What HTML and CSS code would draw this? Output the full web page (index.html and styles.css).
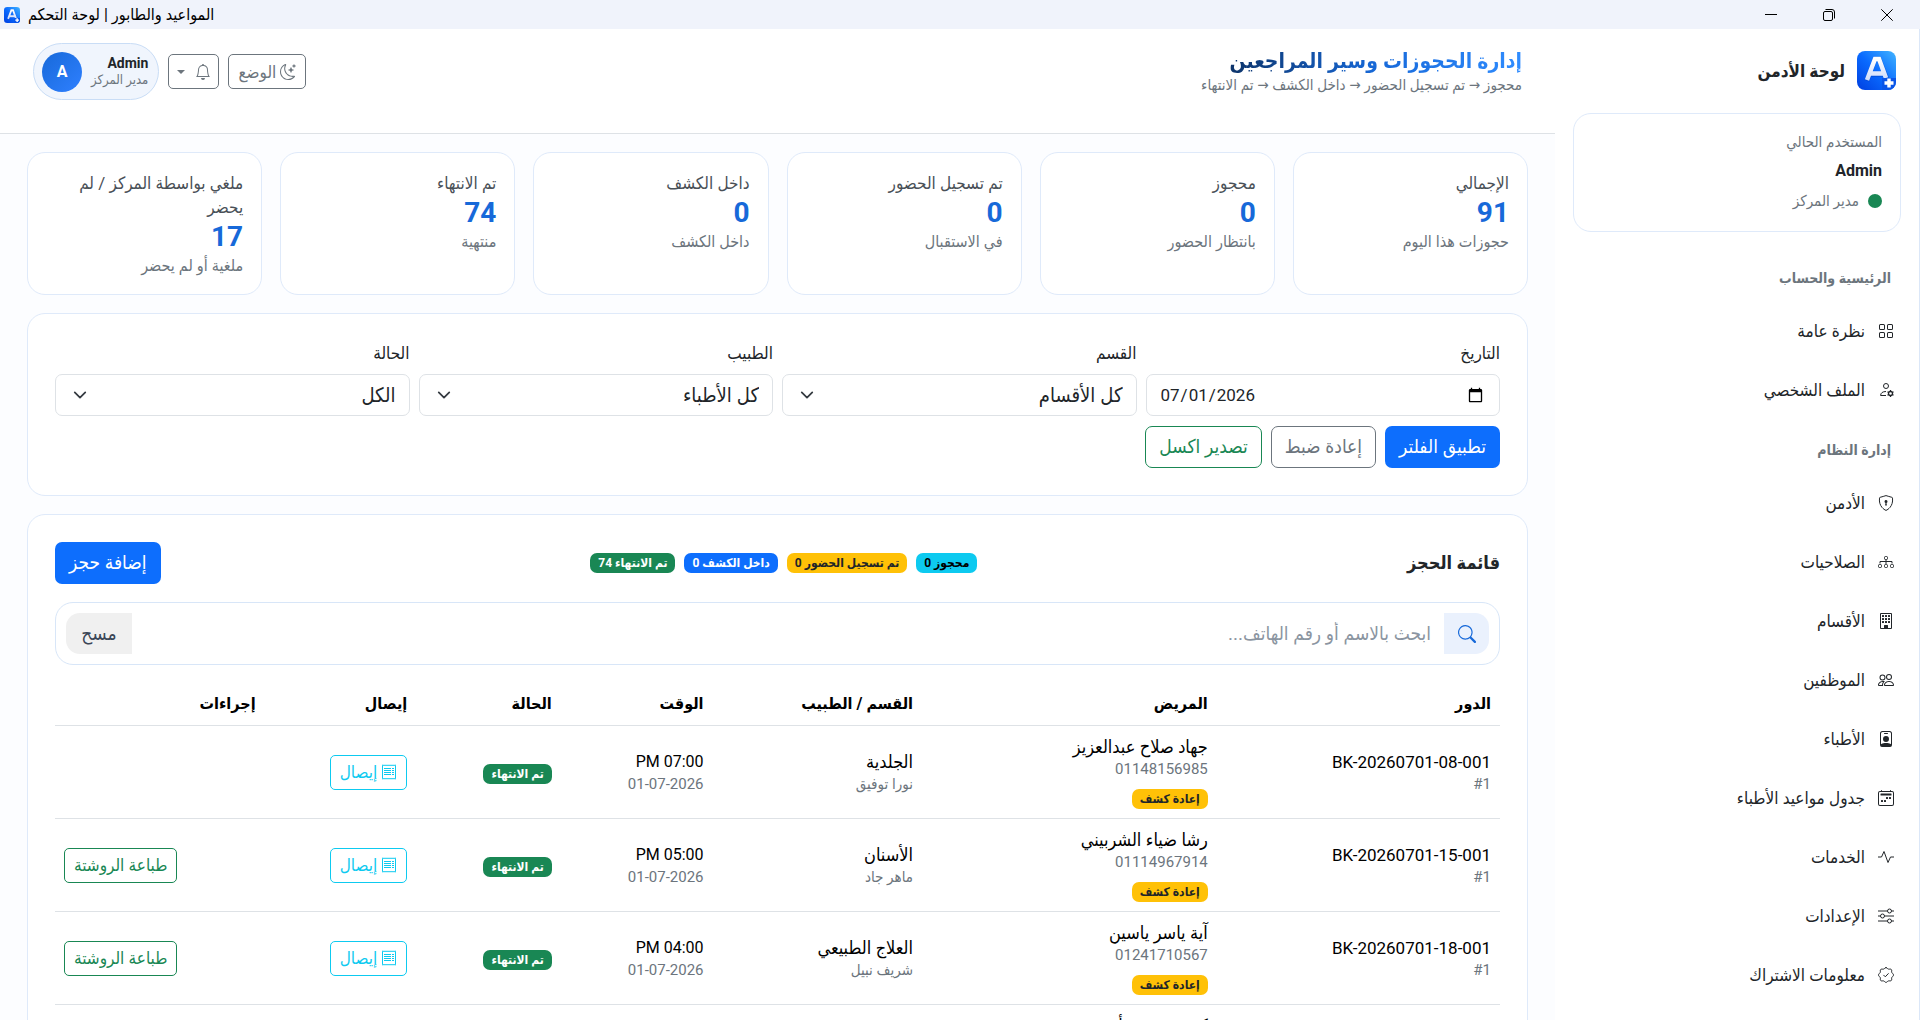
FILE: index.html
```
<!DOCTYPE html>
<html lang="ar" dir="rtl">
<head>
    <meta charset="UTF-8">
    <meta name="viewport" content="width=device-width, initial-scale=1.0">
    <title>المواعيد والطابور | لوحة التحكم</title>
    <link rel="stylesheet" href="styles.css">
</head>
<body>
    <!-- Icon set -->
    <svg class="sprite" aria-hidden="true">
        <defs>
            <linearGradient id="logo-bg" x1="0" y1="1" x2="1" y2="0">
                <stop offset="0" stop-color="#003fe0"/>
                <stop offset=".5" stop-color="#0a6bff"/>
                <stop offset="1" stop-color="#42b4ff"/>
            </linearGradient>
            <linearGradient id="logo-mark" x1="0" y1="0" x2="0" y2="1">
                <stop offset="0" stop-color="#fff"/>
                <stop offset="1" stop-color="#cfdcfa"/>
            </linearGradient>
        </defs>
        <symbol id="i-logo" viewBox="0 0 39 39">
            <rect width="39" height="39" rx="8" fill="url(#logo-bg)"/>
            <path d="M10 30 18 8h4l8 20M14 23.500h12" fill="none" stroke="#0038b8" stroke-opacity=".35" stroke-width="5"/>
            <path d="M10 29 18 8h4l7 19M14 22.500h12" fill="none" stroke="url(#logo-mark)" stroke-width="4.500"/>
            <path d="M25 27h14v4a8 8 0 0 1-8 8h-6z" fill="#0a55e8"/>
            <path d="M32 27.500v9M27.500 32h9" stroke="#fff" stroke-width="3.400"/>
        </symbol>
        <symbol id="i-grid" viewBox="0 0 16 16">
            <path d="M1 2.500A1.500 1.500 0 0 1 2.500 1h3A1.500 1.500 0 0 1 7 2.500v3A1.500 1.500 0 0 1 5.500 7h-3A1.500 1.500 0 0 1 1 5.500zM2.500 2a.5.5 0 0 0-.5.5v3a.5.5 0 0 0 .5.5h3a.5.5 0 0 0 .5-.5v-3a.5.5 0 0 0-.5-.5zm6.500.5A1.500 1.500 0 0 1 10.500 1h3A1.500 1.500 0 0 1 15 2.500v3A1.500 1.500 0 0 1 13.500 7h-3A1.500 1.500 0 0 1 9 5.500zm1.500-.5a.5.5 0 0 0-.5.5v3a.5.5 0 0 0 .5.5h3a.5.5 0 0 0 .5-.5v-3a.5.5 0 0 0-.5-.5zM1 10.500A1.500 1.500 0 0 1 2.500 9h3A1.500 1.500 0 0 1 7 10.500v3A1.500 1.500 0 0 1 5.500 15h-3A1.500 1.500 0 0 1 1 13.500zm1.500-.5a.5.5 0 0 0-.5.5v3a.5.5 0 0 0 .5.5h3a.5.5 0 0 0 .5-.5v-3a.5.5 0 0 0-.5-.5zm6.500.5A1.500 1.500 0 0 1 10.500 9h3a1.500 1.500 0 0 1 1.500 1.500v3a1.500 1.500 0 0 1-1.500 1.500h-3A1.500 1.500 0 0 1 9 13.500zm1.500-.5a.5.5 0 0 0-.5.5v3a.5.5 0 0 0 .5.5h3a.5.5 0 0 0 .5-.5v-3a.5.5 0 0 0-.5-.5z"/>
        </symbol>
        <symbol id="i-person-gear" viewBox="0 0 16 16">
            <g fill="none" stroke="currentColor">
                <circle cx="8" cy="4" r="2.500"/>
                <path d="M8 13.500H2.600c0-2.500 2-4 5.400-4"/>
                <circle cx="12.500" cy="11.500" r="2" stroke-width="1.300"/>
                <path d="M12.500 8v1.500m0 4V15M9.500 9.800l1.200.7m3.600 2 1.200.7m0-3.400-1.200.7m-3.600 2-1.200.7" stroke-width="1.300"/>
            </g>
        </symbol>
        <symbol id="i-shield" viewBox="0 0 16 16">
            <path d="M8 .6C6.400 1.100 4 1.800 2.200 2.300a.9.9 0 0 0-.7.800C1 7.200 2.200 10.200 4 12.400c1.200 1.400 2.700 2.500 4 3 1.300-.5 2.800-1.600 4-3 1.800-2.200 3-5.200 2.500-9.300a.9.9 0 0 0-.7-.8C12 1.800 9.600 1.100 8 .6z" fill="none" stroke="currentColor"/>
            <path d="M9.500 6.500a1.500 1.500 0 0 1-1 1.415l.385 1.990a.5.5 0 0 1-.491.595h-.788a.5.5 0 0 1-.490-.595l.384-1.990a1.500 1.500 0 1 1 2-1.415"/>
        </symbol>
        <symbol id="i-diagram" viewBox="0 0 16 16">
            <g fill="none" stroke="currentColor">
                <rect x="6.500" y="2.500" width="3" height="3" rx="1"/>
                <rect x=".5" y="10.500" width="3" height="3" rx="1"/>
                <rect x="6.500" y="10.500" width="3" height="3" rx="1"/>
                <rect x="12.500" y="10.500" width="3" height="3" rx="1"/>
                <path d="M8 5.500V10M2 9.500v-2h12v2"/>
            </g>
        </symbol>
        <symbol id="i-building" viewBox="0 0 16 16">
            <path d="M4 2.500a.5.5 0 0 1 .5-.5h1a.5.5 0 0 1 .5.5v1a.5.5 0 0 1-.5.5h-1a.5.5 0 0 1-.5-.5zm3 0a.5.5 0 0 1 .5-.5h1a.5.5 0 0 1 .5.5v1a.5.5 0 0 1-.5.5h-1a.5.5 0 0 1-.5-.5zm3.500-.5a.5.5 0 0 0-.5.5v1a.5.5 0 0 0 .5.5h1a.5.5 0 0 0 .5-.5v-1a.5.5 0 0 0-.5-.5zM4 5.500a.5.5 0 0 1 .5-.5h1a.5.5 0 0 1 .5.5v1a.5.5 0 0 1-.5.5h-1a.5.5 0 0 1-.5-.5zM7.500 5a.5.5 0 0 0-.5.5v1a.5.5 0 0 0 .5.5h1a.5.5 0 0 0 .5-.5v-1a.5.5 0 0 0-.5-.5zm2.500.5a.5.5 0 0 1 .5-.5h1a.5.5 0 0 1 .5.5v1a.5.5 0 0 1-.5.5h-1a.5.5 0 0 1-.5-.5zM4.500 8a.5.5 0 0 0-.5.5v1a.5.5 0 0 0 .5.5h1a.5.5 0 0 0 .5-.5v-1a.5.5 0 0 0-.5-.5zm2.500.5a.5.5 0 0 1 .5-.5h1a.5.5 0 0 1 .5.5v1a.5.5 0 0 1-.5.5h-1a.5.5 0 0 1-.5-.5zm3.500-.5a.5.5 0 0 0-.5.5v1a.5.5 0 0 0 .5.5h1a.5.5 0 0 0 .5-.5v-1a.5.5 0 0 0-.5-.5z"/>
            <path d="M2 1a1 1 0 0 1 1-1h10a1 1 0 0 1 1 1v14a1 1 0 0 1-1 1H3a1 1 0 0 1-1-1zm11 0H3v14h3v-2.500a.5.5 0 0 1 .5-.5h3a.5.5 0 0 1 .5.5V15h3z"/>
        </symbol>
        <symbol id="i-people" viewBox="0 0 16 16">
            <path d="M15 14s1 0 1-1-1-4-5-4-5 3-5 4 1 1 1 1zm-7.978-1L7 12.996c.001-.264.167-1.030.760-1.720C8.312 10.629 9.282 10 11 10c1.717 0 2.687.63 3.240 1.276.593.690.758 1.457.760 1.720l-.008.002-.014.002zM11 7a2 2 0 1 0 0-4 2 2 0 0 0 0 4m3-2a3 3 0 1 1-6 0 3 3 0 0 1 6 0M6.936 9.280a6 6 0 0 0-1.230-.247A7 7 0 0 0 5 9c-4 0-5 3-5 4q0 1 1 1h4.216A2.240 2.240 0 0 1 5 13c0-1.010.377-2.042 1.090-2.904.243-.294.526-.569.846-.816M4.920 10A5.500 5.500 0 0 0 4 13H1c0-.26.164-1.030.760-1.724.545-.636 1.492-1.256 3.160-1.275ZM1.500 5.500a3 3 0 1 1 6 0 3 3 0 0 1-6 0m3-2a2 2 0 1 0 0 4 2 2 0 0 0 0-4"/>
        </symbol>
        <symbol id="i-badge" viewBox="0 0 16 16">
            <path d="M6.500 2a.5.5 0 0 0 0 1h3a.5.5 0 0 0 0-1zM11 8a3 3 0 1 1-6 0 3 3 0 0 1 6 0"/>
            <path d="M4.500 0A2.500 2.500 0 0 0 2 2.500V14a2 2 0 0 0 2 2h8a2 2 0 0 0 2-2V2.500A2.500 2.500 0 0 0 11.500 0zM3 2.500A1.500 1.500 0 0 1 4.500 1h7A1.500 1.500 0 0 1 13 2.500v10.795a4.200 4.200 0 0 0-.776-.492C11.392 12.387 10.063 12 8 12s-3.392.387-4.224.803a4.200 4.200 0 0 0-.776.492z"/>
        </symbol>
        <symbol id="i-calendar" viewBox="0 0 16 16">
            <path d="M3.500 0a.5.5 0 0 1 .5.5V1h8V.5a.5.5 0 0 1 1 0V1h1a2 2 0 0 1 2 2v11a2 2 0 0 1-2 2H2a2 2 0 0 1-2-2V3a2 2 0 0 1 2-2h1V.5a.5.5 0 0 1 .5-.5M2 2a1 1 0 0 0-1 1v11a1 1 0 0 0 1 1h12a1 1 0 0 0 1-1V3a1 1 0 0 0-1-1z"/>
            <path d="M2.500 4a.5.5 0 0 1 .5-.5h10a.5.5 0 0 1 .5.5v1a.5.5 0 0 1-.5.5H3a.5.5 0 0 1-.5-.5zM11 7.500a.5.5 0 0 1 .5-.5h1a.5.5 0 0 1 .5.5v1a.5.5 0 0 1-.5.5h-1a.5.5 0 0 1-.5-.5zm-3 0a.5.5 0 0 1 .5-.5h1a.5.5 0 0 1 .5.5v1a.5.5 0 0 1-.5.5h-1a.5.5 0 0 1-.5-.5zm-5 3a.5.5 0 0 1 .5-.5h1a.5.5 0 0 1 .5.5v1a.5.5 0 0 1-.5.5h-1a.5.5 0 0 1-.5-.5zm3 0a.5.5 0 0 1 .5-.5h1a.5.5 0 0 1 .5.5v1a.5.5 0 0 1-.5.5h-1a.5.5 0 0 1-.5-.5z"/>
        </symbol>
        <symbol id="i-activity" viewBox="0 0 16 16">
            <path d="M0 8h3.500L6 2.500l4 11L12.500 8H16" fill="none" stroke="currentColor" stroke-linejoin="round"/>
        </symbol>
        <symbol id="i-sliders" viewBox="0 0 16 16">
            <g fill="none" stroke="currentColor">
                <circle cx="11.500" cy="3" r="2"/>
                <circle cx="4.500" cy="8" r="2"/>
                <circle cx="11.500" cy="13" r="2"/>
                <path d="M0 3h9.500m4 0H16M0 8h2.500m4 0H16M0 13h9.500m4 0H16"/>
            </g>
        </symbol>
        <symbol id="i-patch" viewBox="0 0 16 16">
            <g fill="none" stroke="currentColor" stroke-linejoin="round" stroke-linecap="round">
                <path d="M8 .6c1 0 1.500 1.300 2.500 1.500s2.200-.4 2.900.5c.7.800-.1 2 .4 2.900s1.700 1.400 1.700 2.500-1.200 1.600-1.700 2.500.3 2.100-.4 2.900-1.900.3-2.900.5S9 15.400 8 15.400s-1.500-1.300-2.500-1.500-2.200.4-2.900-.5.100-2-.4-2.900S.5 9.100.5 8s1.200-1.600 1.700-2.500-.3-2.100.4-2.900 1.900-.3 2.900-.5S7 .6 8 .6z"/>
                <path d="m5.700 8.200 1.600 1.600 3-3.200"/>
            </g>
        </symbol>
        <symbol id="i-moon" viewBox="0 0 16 16">
            <path d="M6 .278a.77.77 0 0 1 .080.858 7.200 7.200 0 0 0-.878 3.460c0 4.021 3.278 7.277 7.318 7.277q.792-.001 1.533-.160a.79.79 0 0 1 .810.316.73.73 0 0 1-.031.893A8.350 8.350 0 0 1 8.344 16C3.734 16 0 12.286 0 7.710 0 4.266 2.114 1.312 5.124.060A.75.75 0 0 1 6 .278M4.858 1.311A7.270 7.270 0 0 0 1.025 7.710c0 4.020 3.279 7.276 7.319 7.276a7.320 7.320 0 0 0 5.205-2.162q-.506.063-1.029.063c-4.610 0-8.343-3.714-8.343-8.290 0-1.167.242-2.278.681-3.286"/>
            <path d="M10.794 3.148a.217.217 0 0 1 .412 0l.387 1.162c.173.518.579.924 1.097 1.097l1.162.387a.217.217 0 0 1 0 .412l-1.162.387a1.730 1.730 0 0 0-1.097 1.097l-.387 1.162a.217.217 0 0 1-.412 0l-.387-1.162A1.730 1.730 0 0 0 9.310 6.593l-1.162-.387a.217.217 0 0 1 0-.412l1.162-.387a1.730 1.730 0 0 0 1.097-1.097zM13.863.099a.145.145 0 0 1 .274 0l.258.774c.115.346.386.617.732.732l.774.258a.145.145 0 0 1 0 .274l-.774.258a1.160 1.160 0 0 0-.732.732l-.258.774a.145.145 0 0 1-.274 0l-.258-.774a1.160 1.160 0 0 0-.732-.732l-.774-.258a.145.145 0 0 1 0-.274l.774-.258c.346-.115.617-.386.732-.732z"/>
        </symbol>
        <symbol id="i-bell" viewBox="0 0 16 16">
            <path d="M8 16a2 2 0 0 0 2-2H6a2 2 0 0 0 2 2M8 1.918l-.797.161A4 4 0 0 0 4 6c0 .628-.134 2.197-.459 3.742-.160.767-.376 1.566-.663 2.258h10.244c-.287-.692-.502-1.490-.663-2.258C12.134 8.197 12 6.628 12 6a4 4 0 0 0-3.203-3.920zM14.220 12c.223.447.481.801.780 1H1c.299-.199.557-.553.780-1C2.680 10.200 3 6.880 3 6c0-2.420 1.720-4.440 4.005-4.901a1 1 0 1 1 1.990 0A5 5 0 0 1 13 6c0 .880.320 4.200 1.220 6"/>
        </symbol>
        <symbol id="i-search" viewBox="0 0 16 16">
            <path d="M11.742 10.344a6.500 6.500 0 1 0-1.397 1.398h-.001q.044.060.098.115l3.850 3.850a1 1 0 0 0 1.415-1.414l-3.850-3.850a1 1 0 0 0-.115-.1zM12 6.500a5.500 5.500 0 1 1-11 0 5.500 5.500 0 0 1 11 0"/>
        </symbol>
        <symbol id="i-receipt" viewBox="0 0 16 16">
            <g fill="none" stroke="currentColor">
                <path d="M1.500 1.500v13M14.500 1.500v13"/>
                <path d="m1 1.500 1-.6 1 .8 1-.8 1 .8 1-.8 1 .8 1-.8 1 .8 1-.8 1 .8 1-.8 1 .8 1-.8 1 .6M1 14.500l1 .6 1-.8 1 .8 1-.8 1 .8 1-.8 1 .8 1-.8 1 .8 1-.8 1 .8 1-.8 1 .8 1-.6"/>
                <path d="M3 4.500h7m1 0h2M3 6.500h7m1 0h2M3 8.500h7m1 0h2M3 10.500h7m1 0h2"/>
            </g>
        </symbol>
    </svg>

    <!-- Window title bar -->
    <header class="titlebar" dir="ltr">
        <svg class="titlebar-logo"><use href="#i-logo"/></svg>
        <span class="titlebar-text" dir="rtl">المواعيد والطابور | لوحة التحكم</span>
        <div class="window-controls">
            <button type="button" aria-label="تصغير"><svg viewBox="0 0 12 12"><path d="M0 5.500h12"/></svg></button>
            <button type="button" aria-label="استعادة"><svg viewBox="0 0 12 12"><rect x=".5" y="2.500" width="9" height="9" rx="1.500"/><path d="M2.500.5h6.500a2.500 2.500 0 0 1 2.500 2.500v6.500"/></svg></button>
            <button type="button" aria-label="إغلاق"><svg viewBox="0 0 12 12"><path d="m.3.3 11.400 11.400M11.700.3.3 11.700"/></svg></button>
        </div>
    </header>

    <div class="layout">
        <aside class="sidebar">
            <div class="brand">
                <svg class="brand-logo"><use href="#i-logo"/></svg>
                <span>لوحة الأدمن</span>
            </div>

            <div class="current-user">
                <div class="muted">المستخدم الحالي</div>
                <div class="current-name">Admin</div>
                <div class="current-role"><span class="dot"></span><span class="muted">مدير المركز</span></div>
            </div>

            <nav class="nav">
                <div class="nav-title">الرئيسية والحساب</div>
                <a class="nav-link" href="#"><svg class="icon"><use href="#i-grid"/></svg>نظرة عامة</a>
                <a class="nav-link" href="#"><svg class="icon"><use href="#i-person-gear"/></svg>الملف الشخصي</a>
                <div class="nav-title">إدارة النظام</div>
                <a class="nav-link" href="#"><svg class="icon"><use href="#i-shield"/></svg>الأدمن</a>
                <a class="nav-link" href="#"><svg class="icon"><use href="#i-diagram"/></svg>الصلاحيات</a>
                <a class="nav-link" href="#"><svg class="icon"><use href="#i-building"/></svg>الأقسام</a>
                <a class="nav-link" href="#"><svg class="icon"><use href="#i-people"/></svg>الموظفين</a>
                <a class="nav-link" href="#"><svg class="icon"><use href="#i-badge"/></svg>الأطباء</a>
                <a class="nav-link" href="#"><svg class="icon"><use href="#i-calendar"/></svg>جدول مواعيد الأطباء</a>
                <a class="nav-link" href="#"><svg class="icon"><use href="#i-activity"/></svg>الخدمات</a>
                <a class="nav-link" href="#"><svg class="icon"><use href="#i-sliders"/></svg>الإعدادات</a>
                <a class="nav-link" href="#"><svg class="icon"><use href="#i-patch"/></svg>معلومات الاشتراك</a>
            </nav>
        </aside>

        <main class="main">
            <div class="topbar">
                <div>
                    <h1 class="page-title">إدارة الحجوزات وسير المراجعين</h1>
                    <div class="page-subtitle">محجوز → تم تسجيل الحضور → داخل الكشف → تم الانتهاء</div>
                </div>
                <div class="topbar-actions">
                    <button type="button" class="btn btn-sm btn-outline-secondary"><svg class="icon"><use href="#i-moon"/></svg>الوضع</button>
                    <button type="button" class="btn btn-sm btn-outline-secondary btn-bell" aria-label="الإشعارات"><svg class="icon"><use href="#i-bell"/></svg><span class="caret"></span></button>
                    <div class="user-pill">
                        <div>
                            <div class="pill-name">Admin</div>
                            <div class="pill-role">مدير المركز</div>
                        </div>
                        <div class="avatar">A</div>
                    </div>
                </div>
            </div>

            <div class="content">
                <section class="stats">
                    <div class="card stat">
                        <div class="stat-label">الإجمالي</div>
                        <div class="stat-value">91</div>
                        <div class="stat-note">حجوزات هذا اليوم</div>
                    </div>
                    <div class="card stat">
                        <div class="stat-label">محجوز</div>
                        <div class="stat-value">0</div>
                        <div class="stat-note">بانتظار الحضور</div>
                    </div>
                    <div class="card stat">
                        <div class="stat-label">تم تسجيل الحضور</div>
                        <div class="stat-value">0</div>
                        <div class="stat-note">في الاستقبال</div>
                    </div>
                    <div class="card stat">
                        <div class="stat-label">داخل الكشف</div>
                        <div class="stat-value">0</div>
                        <div class="stat-note">داخل الكشف</div>
                    </div>
                    <div class="card stat">
                        <div class="stat-label">تم الانتهاء</div>
                        <div class="stat-value">74</div>
                        <div class="stat-note">منتهية</div>
                    </div>
                    <div class="card stat">
                        <div class="stat-label">ملغي بواسطة المركز / لم يحضر</div>
                        <div class="stat-value">17</div>
                        <div class="stat-note">ملغية أو لم يحضر</div>
                    </div>
                </section>

                <form class="card filters">
                    <div class="filter-grid">
                        <div>
                            <label class="form-label" for="date">التاريخ</label>
                            <input class="form-control" type="date" id="date" value="2026-07-01" dir="ltr">
                        </div>
                        <div>
                            <label class="form-label" for="department">القسم</label>
                            <select class="form-control form-select" id="department"><option>كل الأقسام</option></select>
                        </div>
                        <div>
                            <label class="form-label" for="doctor">الطبيب</label>
                            <select class="form-control form-select" id="doctor"><option>كل الأطباء</option></select>
                        </div>
                        <div>
                            <label class="form-label" for="status">الحالة</label>
                            <select class="form-control form-select" id="status"><option>الكل</option></select>
                        </div>
                    </div>
                    <div class="filter-actions">
                        <button type="button" class="btn btn-primary">تطبيق الفلتر</button>
                        <button type="button" class="btn btn-outline-secondary">إعادة ضبط</button>
                        <button type="button" class="btn btn-outline-success">تصدير اكسل</button>
                    </div>
                </form>

                <section class="card bookings">
                    <div class="bookings-head">
                        <h2 class="bookings-title">قائمة الحجز</h2>
                        <div class="badges">
                            <span class="badge bg-info">محجوز 0</span>
                            <span class="badge bg-warning">تم تسجيل الحضور 0</span>
                            <span class="badge bg-primary">داخل الكشف 0</span>
                            <span class="badge bg-success">تم الانتهاء 74</span>
                        </div>
                        <button type="button" class="btn btn-primary">إضافة حجز</button>
                    </div>

                    <div class="search">
                        <label class="search-icon" for="search" aria-label="بحث"><svg class="icon"><use href="#i-search"/></svg></label>
                        <input class="search-input" type="text" id="search" placeholder="ابحث بالاسم أو رقم الهاتف...">
                        <button type="button" class="search-clear">مسح</button>
                    </div>

                    <table class="table">
                        <thead>
                            <tr>
                                <th class="col-turn">الدور</th>
                                <th class="col-patient">المريض</th>
                                <th class="col-dept">القسم / الطبيب</th>
                                <th class="col-time">الوقت</th>
                                <th class="col-status">الحالة</th>
                                <th class="col-receipt">إيصال</th>
                                <th class="col-actions">إجراءات</th>
                            </tr>
                        </thead>
                        <tbody>
                            <tr>
                                <td><div class="code">BK-20260701-08-001</div><div class="small" dir="ltr">#1</div></td>
                                <td class="patient"><div>جهاد صلاح عبدالعزيز</div><div class="small">01148156985</div><span class="badge bg-warning">إعادة كشف</span></td>
                                <td><div>الجلدية</div><div class="small">نورا توفيق</div></td>
                                <td><div class="time">07:00 PM</div><div class="small"><bdi>01-07-2026</bdi></div></td>
                                <td><span class="badge bg-success">تم الانتهاء</span></td>
                                <td><button type="button" class="btn btn-sm btn-outline-info"><svg class="icon"><use href="#i-receipt"/></svg>إيصال</button></td>
                                <td class="actions"></td>
                            </tr>
                            <tr>
                                <td><div class="code">BK-20260701-15-001</div><div class="small" dir="ltr">#1</div></td>
                                <td class="patient"><div>رشا ضياء الشربيني</div><div class="small">01114967914</div><span class="badge bg-warning">إعادة كشف</span></td>
                                <td><div>الأسنان</div><div class="small">ماهر جاد</div></td>
                                <td><div class="time">05:00 PM</div><div class="small"><bdi>01-07-2026</bdi></div></td>
                                <td><span class="badge bg-success">تم الانتهاء</span></td>
                                <td><button type="button" class="btn btn-sm btn-outline-info"><svg class="icon"><use href="#i-receipt"/></svg>إيصال</button></td>
                                <td class="actions"><button type="button" class="btn btn-sm btn-outline-success">طباعة الروشتة</button></td>
                            </tr>
                            <tr>
                                <td><div class="code">BK-20260701-18-001</div><div class="small" dir="ltr">#1</div></td>
                                <td class="patient"><div>آية ياسر ياسين</div><div class="small">01241710567</div><span class="badge bg-warning">إعادة كشف</span></td>
                                <td><div>العلاج الطبيعي</div><div class="small">شريف نبيل</div></td>
                                <td><div class="time">04:00 PM</div><div class="small"><bdi>01-07-2026</bdi></div></td>
                                <td><span class="badge bg-success">تم الانتهاء</span></td>
                                <td><button type="button" class="btn btn-sm btn-outline-info"><svg class="icon"><use href="#i-receipt"/></svg>إيصال</button></td>
                                <td class="actions"><button type="button" class="btn btn-sm btn-outline-success">طباعة الروشتة</button></td>
                            </tr>
                            <tr>
                                <td></td>
                                <td class="patient"><div>كريم محمود أنور</div></td>
                                <td></td>
                                <td></td>
                                <td></td>
                                <td></td>
                                <td class="actions"></td>
                            </tr>
                        </tbody>
                    </table>
                </section>
            </div>
        </main>
    </div>
</body>
</html>
```

FILE: styles.css
```
* {
    box-sizing: border-box;
}

body {
    margin: 0;
    height: 100vh;
    display: flex;
    flex-direction: column;
    overflow: hidden;
    font-family: Roboto, "DejaVu Sans Condensed", "DejaVu Sans", sans-serif;
    font-size: 16px;
    line-height: 24px;
    color: #212529;
    background-color: #fcfdff;
}

button,
input,
select {
    font-family: inherit;
}

.sprite {
    position: absolute;
    width: 0;
    height: 0;
}

.icon {
    width: 16px;
    height: 16px;
    fill: currentColor;
    flex-shrink: 0;
}

/* Window title bar */
.titlebar {
    display: flex;
    align-items: center;
    height: 29px;
    flex-shrink: 0;
    padding: 0 4px;
    gap: 8px;
    background-color: #f0f3fb;
    color: #000;
    font-size: 16px;
}

.titlebar-logo {
    width: 16px;
    height: 16px;
}

.window-controls {
    display: flex;
    margin-left: auto;
    height: 100%;
}

.window-controls button {
    width: 58px;
    padding: 0;
    border: none;
    background: none;
    display: flex;
    align-items: center;
    justify-content: center;
}

.window-controls svg {
    width: 12px;
    height: 12px;
    fill: none;
    stroke: #000;
}

.layout {
    display: flex;
    flex: 1;
    min-height: 0;
}

/* Sidebar */
.sidebar {
    width: 365px;
    flex-shrink: 0;
    padding: 22px 18px;
    background-color: #fff;
    border-right: 1px solid #dbe7f8;
    overflow: hidden;
}

.brand {
    display: flex;
    align-items: center;
    gap: 12px;
    padding: 0 5px;
    font-size: 17px;
    font-weight: bold;
}

.brand-logo {
    width: 39px;
    height: 39px;
}

.current-user {
    margin-top: 23px;
    padding: 18px;
    border: 1px solid #dfeafa;
    border-radius: 18px;
    display: flex;
    flex-direction: column;
    gap: 6px;
}

.muted {
    color: #6c757d;
    font-size: 15px;
    line-height: 21px;
}

.current-name {
    font-weight: bold;
}

.current-role {
    display: flex;
    align-items: center;
    gap: 9px;
    min-height: 24px;
}

.dot {
    width: 14px;
    height: 14px;
    border-radius: 50%;
    background-color: #198754;
}

.nav {
    display: flex;
    flex-direction: column;
    padding-top: 34px;
}

.nav-title {
    padding: 0 10px;
    margin-bottom: 11px;
    font-size: 14px;
    font-weight: bold;
    color: #6c757d;
}

.nav-link + .nav-title {
    margin-top: 19px;
}

.nav-link {
    display: flex;
    align-items: center;
    gap: 13px;
    height: 59px;
    padding: 0 7px;
    color: #212529;
    font-size: 17px;
    text-decoration: none;
}

/* Top bar */
.main {
    flex: 1;
    min-width: 0;
}

.topbar {
    display: flex;
    justify-content: space-between;
    align-items: flex-start;
    height: 105px;
    padding: 14px 33px;
    background-color: #fff;
    border-bottom: 1px solid #dee2e6;
}

.page-title {
    margin: 4px 0 0;
    font-size: 21px;
    line-height: 28px;
    font-weight: bold;
    color: transparent;
    background: linear-gradient(to left, #2f8cff, #1769d9 45%, #0b2a55);
    background-clip: text;
    -webkit-background-clip: text;
}

.page-subtitle {
    font-size: 15px;
    line-height: 21px;
    color: #6c757d;
}

.topbar-actions {
    display: flex;
    align-items: center;
    gap: 9px;
}

.user-pill {
    display: flex;
    align-items: center;
    gap: 9px;
    height: 57px;
    padding: 0 10px 0 8px;
    border: 1px solid #c9ddf6;
    border-radius: 29px;
    background-color: #f0f5fd;
}

.pill-name {
    font-size: 14px;
    line-height: 16px;
    font-weight: bold;
}

.pill-role {
    font-size: 13px;
    line-height: 18px;
    color: #6c757d;
}

.avatar {
    width: 40px;
    height: 40px;
    border-radius: 50%;
    background: linear-gradient(135deg, #1769d9, #2f80ff);
    color: #fff;
    font-weight: bold;
    line-height: 40px;
    text-align: center;
}

.btn-bell {
    width: 51px;
}

.caret {
    border: 4px solid transparent;
    border-top-color: currentColor;
    border-bottom: 0;
    margin-right: 6px;
}

/* Buttons */
.btn {
    display: inline-flex;
    align-items: center;
    justify-content: center;
    gap: 4px;
    height: 42px;
    padding: 0 13px;
    border: 1px solid transparent;
    border-radius: 7px;
    background-color: #fff;
    font-size: 19px;
    line-height: 24px;
    white-space: nowrap;
    cursor: pointer;
}

.btn-sm {
    height: 35px;
    padding: 0 9px;
    border-radius: 5px;
    font-size: 17px;
}

.btn-primary {
    background-color: #0d6efd;
    color: #fff;
}

.btn-outline-secondary {
    border-color: #6c757d;
    color: #6c757d;
}

.btn-outline-success {
    border-color: #198754;
    color: #198754;
}

.btn-outline-info {
    border-color: #0dcaf0;
    color: #0dcaf0;
}

/* Cards */
.content {
    display: flex;
    flex-direction: column;
    gap: 18px;
    padding: 18px 27px;
}

.card {
    background-color: #fff;
    border: 1px solid #dfeafa;
    border-radius: 18px;
}

.stats {
    display: grid;
    grid-template-columns: repeat(6, 1fr);
    gap: 18px;
}

.stat {
    padding: 18px;
}

.stat-label {
    font-size: 17px;
    color: #495057;
}

.stat-value {
    font-size: 28px;
    line-height: 36px;
    font-weight: bold;
    color: #1769d9;
}

.stat-note {
    font-size: 16px;
    line-height: 21px;
    color: #6c757d;
}

/* Filters */
.filters {
    padding: 27px;
}

.filter-grid {
    display: grid;
    grid-template-columns: repeat(4, 1fr);
    gap: 9px;
}

.form-label {
    display: block;
    margin-bottom: 9px;
    font-size: 17px;
}

.form-control {
    display: block;
    width: 100%;
    height: 42px;
    padding: 0 13px;
    border: 1px solid #dee2e6;
    border-radius: 7px;
    background-color: #fff;
    color: #212529;
    font-size: 20px;
}

input.form-control {
    font-size: 17px;
}

.form-select {
    appearance: none;
    background-image: url("data:image/svg+xml,%3csvg xmlns='http://www.w3.org/2000/svg' viewBox='0 0 16 16'%3e%3cpath fill='none' stroke='%23343a40' stroke-linecap='round' stroke-linejoin='round' stroke-width='2' d='m2 5 6 6 6-6'/%3e%3c/svg%3e");
    background-repeat: no-repeat;
    background-position: left 16px center;
    background-size: 16px 14px;
}

.filter-actions {
    display: flex;
    gap: 9px;
    margin-top: 10px;
}

/* Bookings */
.bookings {
    padding: 27px;
}

.bookings-head {
    display: flex;
    align-items: center;
    justify-content: space-between;
}

.bookings-title {
    margin: 0;
    font-size: 18px;
    font-weight: bold;
}

.badges {
    display: flex;
    gap: 9px;
}

.badge {
    display: inline-block;
    padding: 0 8px;
    border-radius: 7px;
    font-size: 12px;
    line-height: 20px;
    font-weight: bold;
    color: #fff;
    white-space: nowrap;
}

.bg-info {
    background-color: #0dcaf0;
    color: #000;
}

.bg-warning {
    background-color: #ffc107;
    color: #212529;
}

.bg-primary {
    background-color: #0d6efd;
}

.bg-success {
    background-color: #198754;
}

.search {
    display: flex;
    margin-top: 18px;
    padding: 10px;
    border: 1px solid #d8e6f8;
    border-radius: 18px;
}

.search-icon {
    display: flex;
    align-items: center;
    justify-content: center;
    width: 45px;
    height: 41px;
    border-radius: 0 14px 14px 0;
    background-color: #eaf1fd;
    color: #1769d9;
}

.search-icon .icon {
    width: 18px;
    height: 18px;
}

.search-input {
    flex: 1;
    min-width: 0;
    padding: 0 13px;
    border: none;
    background: none;
    font-size: 19px;
}

.search-input::placeholder {
    color: #8b95a1;
}

.search-clear {
    width: 66px;
    padding: 0;
    border: none;
    border-radius: 14px 0 0 14px;
    background-color: #f0f0f0;
    color: #3a4656;
    font-size: 19px;
}

.table {
    width: 100%;
    margin-top: 18px;
    table-layout: fixed;
    border-collapse: collapse;
    font-size: 16px;
    color: #000;
}

.table th,
.table td {
    padding: 9px;
    border-bottom: 1px solid #dee2e6;
    text-align: right;
    vertical-align: middle;
}

.table td {
    font-size: 18px;
}

.col-turn {
    width: 19.6%;
}

.col-patient {
    width: 20.4%;
}

.col-dept,
.col-actions {
    width: 14.5%;
}

.col-time,
.col-receipt {
    width: 10.5%;
}

.col-status {
    width: 10%;
}

.table .code {
    font-size: 17px;
}

.table .time {
    font-size: 16px;
}

.table .small {
    font-size: 15px;
    line-height: 21px;
    color: #6c757d;
}

.patient .badge {
    margin-top: 9px;
    vertical-align: top;
}

.table td.actions {
    text-align: left;
}
```
